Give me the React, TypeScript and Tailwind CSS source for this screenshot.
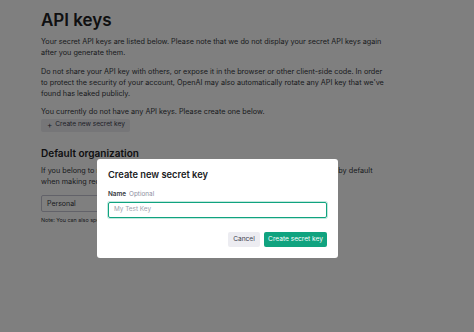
export default function App() {
  const font = { fontFamily: "Inter, 'Noto Sans', sans-serif" };
  return (
    <div className="relative h-[332px] w-[474px] overflow-hidden bg-white" style={font}>
      <div className="pl-[41px] pt-[8px] text-[#353740]">
        <h1 className="text-[17px] font-semibold leading-[24px] text-[#202123]">API keys</h1>
        <div className="mt-[4px] w-[349px] text-[7.25px] leading-[11.3px]">
          <p>
            Your secret API keys are listed below. Please note that we do not display your secret API keys again
            after you generate them.
          </p>
          <p className="mt-[7px]">
            Do not share your API key with others, or expose it in the browser or other client-side code. In order to
            protect the security of your account, OpenAI may also automatically rotate any API key that we've found
            has leaked publicly.
          </p>
          <p className="mt-[7px]">You currently do not have any API keys. Please create one below.</p>
        </div>
        <div className="mt-[1px] flex">
          <div className="flex h-[13px] items-center gap-[3px] whitespace-nowrap rounded-[2px] bg-[#ececf1] pl-[6px] pr-[5px] text-[6.6px] text-[#40414f]">
            <span className="text-[8px] leading-none">+</span>
            <span>Create new secret key</span>
          </div>
        </div>
        <h2 className="mt-[14px] text-[10px] font-semibold leading-[14px] text-[#202123]">Default organization</h2>
        <p className="mt-[5px] w-[338px] text-[7.25px] leading-[11.3px]">
          If you belong to multiple organizations, this setting controls which organization is used by default
          when making requests with the API keys above.
        </p>
        <div className="mt-[8px] flex h-[17px] w-[200px] items-center rounded-[2px] border border-[#c5c5d2] pl-[5px] text-[7px]">
          Personal
        </div>
        <p className="mt-[4px] text-[5.4px] leading-[8px]">
          Note: You can also specify which organization to use for each API request. See Authentication to learn
          more.
        </p>
      </div>

      <div className="absolute inset-0 bg-black/50" />

      <div className="absolute left-[97px] top-[159px] w-[241px] rounded-[3px] bg-white px-[11px] pb-[11px] pt-[9px]">
        <h3 className="text-[9.3px] font-semibold leading-[13px] text-[#202123]">Create new secret key</h3>
        <div className="mt-[9px] flex items-baseline gap-[3px] text-[6.4px] leading-[9px]">
          <span className="font-semibold text-[#353740]">Name</span>
          <span className="text-[#8e8ea0]">Optional</span>
        </div>
        <div className="mt-[3px] flex h-[16px] items-center rounded-[2px] border border-[#10a37f] pl-[5px] text-[6.4px] text-[#a0a0ac] shadow-[0_0_0_1px_rgba(16,163,127,0.25)]">
          My Test Key
        </div>
        <div className="mt-[14px] flex justify-end gap-[4px]">
          <div className="flex h-[15px] w-[32px] items-center justify-center rounded-[2px] bg-[#ececf1] text-[6.6px] text-[#40414f]">
            Cancel
          </div>
          <div className="flex h-[15px] w-[63px] items-center justify-center rounded-[2px] bg-[#10a37f] text-[6.6px] text-white">
            Create secret key
          </div>
        </div>
      </div>
    </div>
  );
}
